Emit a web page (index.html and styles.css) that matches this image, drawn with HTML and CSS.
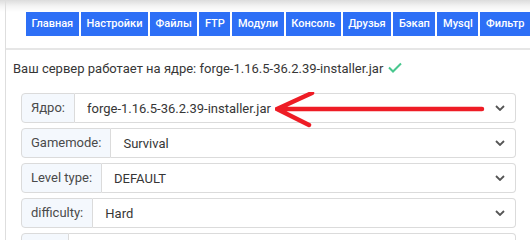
FILE: index.html
```html
<!DOCTYPE html>
<html lang="ru">
<head>
    <meta charset="UTF-8">
    <title>Настройки сервера</title>
    <link rel="stylesheet" href="styles.css">
</head>
<body>
    <div class="card">
        <div class="menu">
            <a href="#">Главная</a>
            <a href="#">Настройки</a>
            <a href="#">Файлы</a>
            <a href="#">FTP</a>
            <a href="#">Модули</a>
            <a href="#">Консоль</a>
            <a href="#">Друзья</a>
            <a href="#">Бэкап</a>
            <a href="#">Mysql</a>
            <a href="#">Фильтр</a>
            <a href="#">Плагины</a>
        </div>
        <div class="content">
            <p class="core">Ваш сервер работает на ядре: forge-1.16.5-36.2.39-installer.jar
                <svg class="ok" width="14" height="11" viewBox="0 0 14 11"><path d="M1 5.5 L5 9.5 L13 1.5" fill="none" stroke="#48c78e" stroke-width="2"/></svg>
            </p>
            <div class="form">
                <div class="group">
                    <span class="label">Ядро:</span>
                    <select><option>forge-1.16.5-36.2.39-installer.jar</option></select>
                </div>
                <div class="group">
                    <span class="label">Gamemode:</span>
                    <select><option>Survival</option></select>
                </div>
                <div class="group">
                    <span class="label">Level type:</span>
                    <select><option>DEFAULT</option></select>
                </div>
                <div class="group">
                    <span class="label">difficulty:</span>
                    <select><option>Hard</option></select>
                </div>
                <div class="group">
                    <span class="label">PVP:</span>
                    <select><option>true</option></select>
                </div>
            </div>
            <!-- стрелка-пометка поверх скриншота -->
            <svg class="arrow" width="220" height="40" viewBox="0 0 220 40">
                <path d="M207 17 L2 17 M37 1 L2 17 L34 33" fill="none" stroke="#ee1c25" stroke-width="4.5" stroke-linecap="round" stroke-linejoin="round"/>
            </svg>
        </div>
    </div>
</body>
</html>
```

FILE: styles.css
```css
*{
    padding: 0;
    margin: 0;
    box-sizing: border-box;
}
body{
    width: 530px;
    height: 240px;
    overflow: hidden;
    font-family: Roboto, "Noto Sans", sans-serif;
    color: #363636;
    background: linear-gradient(#dcdcdc, #f3f3f3 6px, #fff 12px) no-repeat;
    background-size: 100% 12px;
}
.card{
    margin-left: 5px;
    height: 240px;
    border-left: 1px solid #dedede;
}
.menu{
    display: flex;
    gap: 2px;
    padding: 12px 0 12px 20px;
    border-bottom: 2px solid #e6e6e6;
    overflow: hidden;
    white-space: nowrap;
}
.menu a{
    flex: none;
    display: block;
    height: 24px;
    line-height: 24px;
    padding: 0 5.6px;
    background-color: #2d6ff6;
    color: #fff;
    font-size: 11px;
    font-weight: 500;
    text-decoration: none;
}
.content{
    position: relative;
    padding: 9px 14px 0 7px;
}
.core{
    font-size: 13px;
    line-height: 20px;
}
.ok{
    margin-left: 1px;
}
.form{
    padding: 14px 0 0 8px;
}
.group{
    display: flex;
    height: 30px;
    margin-bottom: 5px;
}
.label{
    flex: none;
    padding: 0 9px;
    line-height: 28px;
    font-size: 13px;
    color: #4a4a4a;
    background-color: #f4f8fd;
    border: 1px solid #dbdbdb;
    border-radius: 4px 0 0 4px;
}
.group select{
    flex: 1;
    min-width: 0;
    -webkit-appearance: none;
    appearance: none;
    padding: 0 30px 0 12px;
    font-family: inherit;
    font-size: 13px;
    color: #363636;
    background: #fff url("data:image/svg+xml,%3Csvg xmlns='http://www.w3.org/2000/svg' width='10' height='6'%3E%3Cpath d='M1 1l4 4 4-4' fill='none' stroke='%23555' stroke-width='1.8'/%3E%3C/svg%3E") no-repeat right 10px center;
    border: 1px solid #dbdbdb;
    border-left: none;
    border-radius: 0 4px 4px 0;
    outline: none;
}
.arrow{
    position: absolute;
    left: 269px;
    top: 42px;
}
```
